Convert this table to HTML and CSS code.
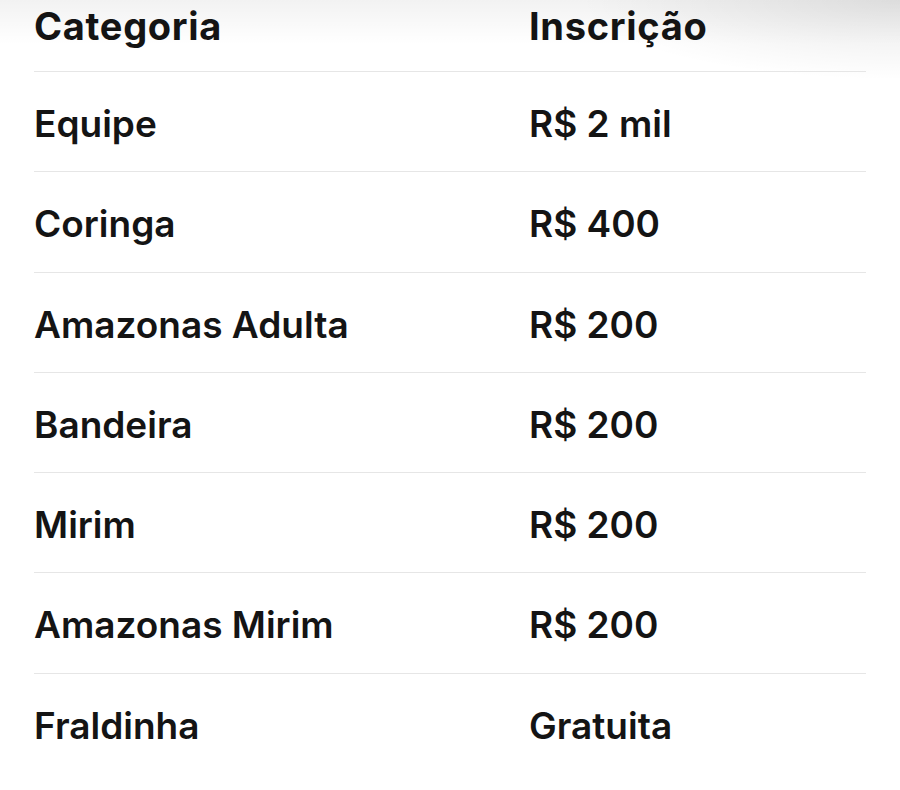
FILE: index.html
```html
<!DOCTYPE html>
<html lang="pt-BR">
<head>
<meta charset="utf-8">
<title>Categorias</title>
<link rel="stylesheet" href="styles.css">
</head>
<body>
<div class="shade"></div>
<div class="table">
  <div class="row head">
    <div class="cell cat">Categoria</div>
    <div class="cell">Inscrição</div>
  </div>
  <div class="row"><div class="cell cat">Equipe</div><div class="cell">R$ 2 mil</div></div>
  <div class="row"><div class="cell cat">Coringa</div><div class="cell">R$ 400</div></div>
  <div class="row"><div class="cell cat">Amazonas Adulta</div><div class="cell">R$ 200</div></div>
  <div class="row"><div class="cell cat">Bandeira</div><div class="cell">R$ 200</div></div>
  <div class="row"><div class="cell cat">Mirim</div><div class="cell">R$ 200</div></div>
  <div class="row"><div class="cell cat">Amazonas Mirim</div><div class="cell">R$ 200</div></div>
  <div class="row last"><div class="cell cat">Fraldinha</div><div class="cell">Gratuita</div></div>
</div>
</body>
</html>
```
FILE: styles.css
```css
html, body {
  margin: 0;
  padding: 0;
  background: #ffffff;
}
body {
  width: 900px;
  height: 790px;
  overflow: hidden;
  font-family: Inter, "Noto Sans", sans-serif;
  color: #141414;
  position: relative;
}
.shade {
  position: absolute;
  left: 0;
  top: 0;
  width: 900px;
  height: 120px;
  pointer-events: none;
  background:
    radial-gradient(ellipse 320px 80px at 900px 0px, rgba(0,0,0,0.09), rgba(0,0,0,0) 100%),
    linear-gradient(to bottom, rgba(0,0,0,0.05), rgba(0,0,0,0) 45px);
}
.table {
  position: relative;
  margin-left: 34px;
  width: 832px;
}
.row {
  display: flex;
  align-items: center;
  box-sizing: border-box;
  height: 100.3px;
  padding-top: 5px;
  border-bottom: 1px solid #e6e6e6;
  font-size: 37px;
  font-weight: 600;
  letter-spacing: 0;
}
.row.head {
  height: 72px;
  padding-top: 4px;
  align-items: flex-start;
  font-size: 38px;
  font-weight: 700;
  letter-spacing: 0.7px;
}
.row.last {
  border-bottom: none;
}
.cell {
  line-height: 1.2;
}
.cat {
  width: 495px;
  flex: none;
}
```
